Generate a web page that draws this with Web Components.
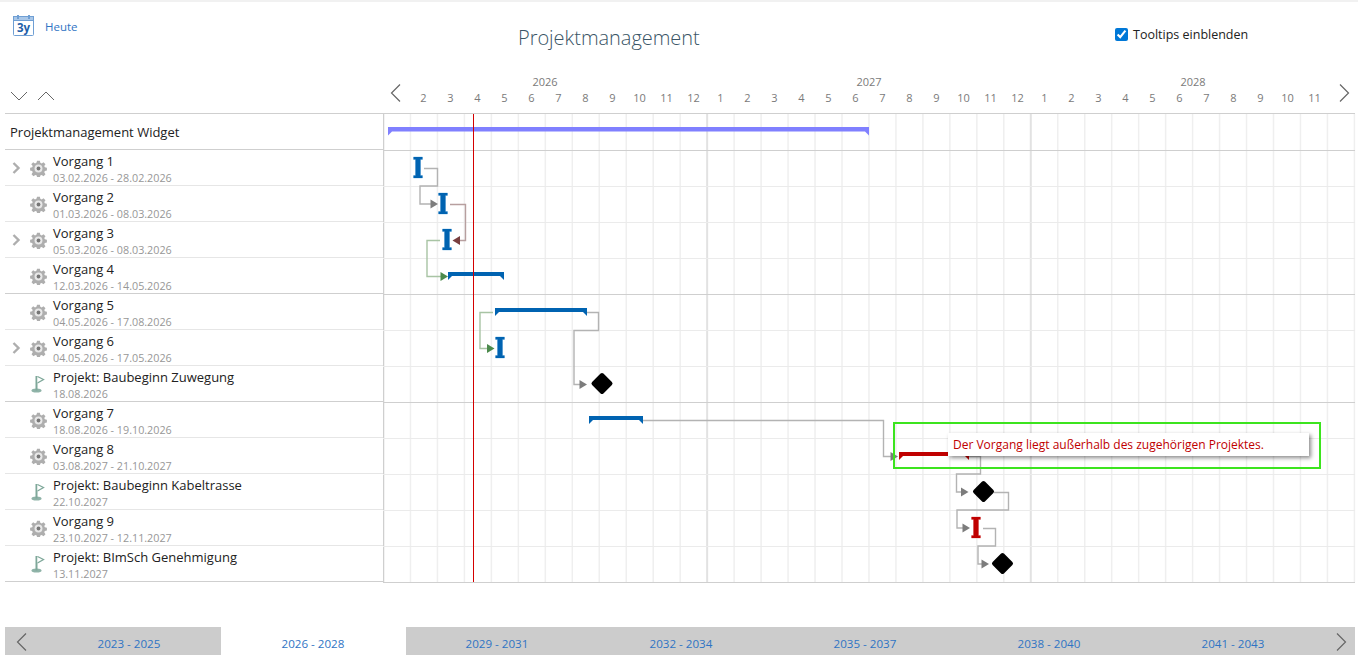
<!DOCTYPE html>
<html lang="de">
<head>
<meta charset="utf-8">
<title>Projektmanagement</title>
<style>
	html, body { margin: 0; height: 100%; overflow: hidden; background: #fff; }
	body { font-family: "Open Sans", "Liberation Sans", sans-serif; }
</style>
</head>
<body>
<gantt-app></gantt-app>

<script>
const FONT = '"Open Sans", "Liberation Sans", sans-serif';

const ICONS = {
	down: '<svg width="18" height="10" viewBox="0 0 18 10"><path d="M1 1l8 8 8-8" fill="none" stroke="#666" stroke-width="1"/></svg>',
	up: '<svg width="18" height="10" viewBox="0 0 18 10"><path d="M1 9l8-8 8 8" fill="none" stroke="#666" stroke-width="1"/></svg>',
	prev: '<svg width="11" height="18" viewBox="0 0 11 18"><path d="M10 .5L1.5 9l8.500 8.500" fill="none" stroke="#666" stroke-width="1.200"/></svg>',
	next: '<svg width="11" height="18" viewBox="0 0 11 18"><path d="M1 .5L9.500 9 1 17.500" fill="none" stroke="#666" stroke-width="1.200"/></svg>',
	expand: '<svg width="9" height="12" viewBox="0 0 9 12"><path d="M1.500 1L6.500 6l-5 5" fill="none" stroke="#aeaeae" stroke-width="2.400"/></svg>',
	gear: '<svg width="17" height="17" viewBox="0 0 18 18"><path d="M7.500 .8h3l.4 2.200 1.500.6 1.900-1.300 2.100 2.100-1.300 1.900.6 1.500 2.200.4v3l-2.200.4-.6 1.500 1.300 1.900-2.100 2.100-1.900-1.300-1.500.6-.4 2.200h-3l-.4-2.200-1.500-.6-1.900 1.300-2.100-2.100 1.300-1.900-.6-1.500-2.200-.4v-3l2.200-.4.6-1.500L1.300 4.400l2.100-2.100 1.900 1.300 1.500-.6z" fill="#aeaeae"/><circle cx="9" cy="9" r="4.200" fill="#e8e8e8"/><circle cx="9" cy="9" r="2" fill="#777"/></svg>',
	flag: '<svg width="14" height="18" viewBox="0 0 14 18"><ellipse cx="5.500" cy="15.500" rx="5" ry="2" fill="#8fb3a8"/><rect x="4.500" y="1" width="2" height="14.500" fill="#7fa89a"/><path d="M6.500 1.500l6 3-6 3.500" fill="#fff" stroke="#7fa89a" stroke-width="1.300"/></svg>',
	calendar: '<svg width="22" height="21" viewBox="0 0 22 21"><rect x=".5" y="1.500" width="20" height="19" rx="1" fill="#fff" stroke="#6f9fd4"/><rect x=".5" y="1.500" width="20" height="4" fill="#a9c7e8" stroke="#6f9fd4"/><rect x="4" y="0" width="2" height="4" fill="#6f9fd4"/><rect x="15" y="0" width="2" height="4" fill="#6f9fd4"/><text x="10.500" y="16.500" text-anchor="middle" font-family="\'Open Sans\',sans-serif" font-size="11.500" font-weight="700" fill="#1f5fa8">3y</text></svg>'
};

class GanttToolbar extends HTMLElement {
	constructor() {
		super();
		this.attachShadow({ mode: 'open' });
	}
	connectedCallback() {
		this.shadowRoot.innerHTML = `
			<style>
				:host { display: grid; grid-template-columns: 505px 1fr 243px; height: 68px; border-top: 2px solid #f1f1f1; box-sizing: content-box; }
				.today { display: flex; align-items: flex-start; gap: 10px; padding: 13px 0 0 13px; color: #2f74c4; font-size: 11.500px; line-height: 24px; }
				h1 { margin: 0; padding-top: 21px; font-weight: 300; font-size: 20px; line-height: 30px; color: #3a5566; padding-left: 13px; letter-spacing: -.03px; }
				label { display: flex; align-items: center; gap: 5px; font-size: 12.500px; color: #222; height: 20px; margin-top: 22px; }
				input { margin: 0; width: 13px; height: 13px; accent-color: #0078d7; }
			</style>
			<div class="today">${ICONS.calendar}<span>Heute</span></div>
			<h1>Projektmanagement</h1>
			<label><input type="checkbox" checked>Tooltips einblenden</label>
		`;
	}
}
customElements.define('gantt-toolbar', GanttToolbar);

class GanttTimescale extends HTMLElement {
	constructor() {
		super();
		this.attachShadow({ mode: 'open' });
	}
	connectedCallback() {
		const years = [2026, 2027, 2028].map(y => `<span>${y}</span>`).join('');
		let months = '';
		for (let i = 0; i < 36; i++) months += `<span>${i % 12 + 1}</span>`;
		this.shadowRoot.innerHTML = `
			<style>
				:host { display: grid; grid-template-columns: 378px 972px 1fr; height: 43px; padding-left: 5px; position: relative; color: #7a7a7a; font-size: 11px; }
				.fold { display: flex; gap: 9px; padding: 21px 0 0 5px; }
				.scale { display: flex; flex-direction: column; }
				.years { display: grid; grid-template-columns: repeat(3, 324px); text-align: center; line-height: 16px; padding-top: 4px; }
				.months { display: grid; grid-template-columns: repeat(36, 27px); text-align: center; line-height: 16px; padding-top: 0; }
				.months span:first-child, .months span:last-child { visibility: hidden; }
				.arrow { position: absolute; top: 14px; }
				.prev { left: 390px; }
				.next { left: 1339px; }
			</style>
			<div class="fold">${ICONS.down}${ICONS.up}</div>
			<div class="scale">
				<div class="years">${years}</div>
				<div class="months">${months}</div>
			</div>
			<span class="arrow prev">${ICONS.prev}</span>
			<span class="arrow next">${ICONS.next}</span>
		`;
	}
}
customElements.define('gantt-timescale', GanttTimescale);

class GanttRow extends HTMLElement {
	constructor() {
		super();
		this.attachShadow({ mode: 'open' });
	}
	connectedCallback() {
		const kind = this.getAttribute('kind') || 'task';
		const expand = this.hasAttribute('expand') ? ICONS.expand : '';
		const strong = this.hasAttribute('strong');
		this.shadowRoot.innerHTML = `
			<style>
				:host { display: grid; grid-template-columns: 22px 22px 1fr; height: 35px; border-bottom: 1px solid ${strong ? '#cfcfcf' : '#e6e6e6'}; }
				.exp { display: flex; align-items: center; justify-content: center; }
				.ico { display: flex; align-items: center; justify-content: center; padding-top: 1px; }
				.txt { overflow: hidden; white-space: nowrap; padding: 2px 0 0 4px; }
				.name { font-size: 13px; line-height: 18px; color: #222; }
				.date { font-size: 10.750px; line-height: 15px; color: #979797; margin-top: 1px; }
			</style>
			<div class="exp">${expand}</div>
			<div class="ico">${kind === 'flag' ? ICONS.flag : ICONS.gear}</div>
			<div class="txt">
				<div class="name"><slot></slot></div>
				<div class="date">${this.getAttribute('date')}</div>
			</div>
		`;
	}
}
customElements.define('gantt-row', GanttRow);

class GanttList extends HTMLElement {
	constructor() {
		super();
		this.attachShadow({ mode: 'open' });
	}
	connectedCallback() {
		this.shadowRoot.innerHTML = `
			<style>
				:host { display: block; width: 378px; }
				.root { height: 35px; border-top: 1px solid #cfcfcf; border-bottom: 1px solid #cfcfcf; padding-left: 5px; font-size: 13px; line-height: 37px; color: #222; }
			</style>
			<div class="root">${this.getAttribute('root')}</div>
			<slot></slot>
		`;
	}
}
customElements.define('gantt-list', GanttList);

class GanttChart extends HTMLElement {
	constructor() {
		super();
		this.attachShadow({ mode: 'open' });
	}
	// i-beam marker for a short task
	beam(cx, top, color) {
		const d = `M${cx - 4.5} ${top}h9v2.500h-2v16h2v2.500h-9v-2.500h2v-16h-2z`;
		return `<path d="${d}" fill="${color}" stroke="${color === '#0063b1' ? '#bcdcf2' : '#f0c0c0'}" stroke-width="1" paint-order="stroke"/>`;
	}
	// flat bar with the two small tips hanging from its ends
	bar(x1, x2, top, color, h = 4) {
		return `<path d="M${x1} ${top}H${x2}V${top + h + 4}L${x2 - 4} ${top + h}H${x1 + 4}L${x1} ${top + h + 4}z" fill="${color}"/>`;
	}
	diamond(cx, cy) {
		return `<rect x="${cx - 8}" y="${cy - 8}" width="16" height="16" rx="2" transform="rotate(45 ${cx} ${cy})" fill="#000"/>`;
	}
	link(d, dir, x, y, line, head) {
		const tip = dir === 'r' ? `M${x} ${y}l-7.500-4.500v9z` : `M${x} ${y}l7.500-4.500v9z`;
		return `<path d="${d}" fill="none" stroke="${line}" stroke-width="1.400"/><path d="${tip}" fill="${head}"/>`;
	}
	connectedCallback() {
		let grid = '';
		for (let i = 0; i <= 36; i++) {
			const x = 383.5 + i * 26.97;
			const year = i % 12 === 0 && i > 0 && i < 36;
			grid += `<line x1="${x}" y1="114" x2="${x}" y2="582" stroke="${i === 0 ? '#cfcfcf' : year ? '#e2e2e2' : '#efefef'}" stroke-width="${year ? 2 : 1.500}"/>`;
		}
		[113, 150, 186, 222, 258, 294, 330, 366, 402, 438, 474, 510, 546, 582].forEach(y => {
			const strong = [113, 150, 294, 402, 582].includes(y);
			grid += `<line x1="383" y1="${y + .5}" x2="1355" y2="${y + .5}" stroke="${strong ? '#cfcfcf' : '#ebebeb'}"/>`;
		});

		const gray = '#b3b3b3', grayHead = '#7c7c7c';
		const marks = [
			this.bar(388, 869, 127, '#8080ff', 4.500),
			this.link('M424 168.500H437.500V186H420V204H432', 'r', 438, 204, gray, grayHead),
			this.link('M450 204.500H465.500V240.500H458', 'l', 452.500, 240.500, '#b79f9f', '#7a3f3f'),
			this.link('M440 240.500H427V276.500H442', 'r', 448, 276.500, '#a8c4a4', '#4c8a4c'),
			this.beam(418, 157, '#0063b1'),
			this.beam(443, 193, '#0063b1'),
			this.beam(447, 229, '#0063b1'),
			this.bar(448, 504, 272, '#0063b1'),
			this.bar(495, 587, 308, '#0063b1'),
			this.link('M493 312.500H480V348.500H489', 'r', 494.500, 348.500, '#a8c4a4', '#4c8a4c'),
			this.beam(500, 337, '#0063b1'),
			this.link('M587 312.500H598.500V330.500H574V384.500H581', 'r', 587, 384.500, gray, grayHead),
			this.diamond(602, 383.500),
			this.bar(589, 643, 416, '#0063b1'),
			this.link('M643 420.500H883.500V456.500H892', 'r', 898, 456.500, gray, grayHead),
			this.bar(899, 969, 452, '#c00000'),
			this.link('M969 456.500H980.500V474H956.500V492H963', 'r', 968.500, 492, gray, grayHead),
			this.diamond(983.500, 491.500),
			this.link('M994 492.500H1008.500V510H957V528H964', 'r', 970, 528, gray, grayHead),
			this.beam(976, 517, '#c00000'),
			this.link('M983 528.500H995.500V546H978V564H983', 'r', 989, 564, gray, grayHead),
			this.diamond(1002.500, 563.500)
		].join('');

		this.shadowRoot.innerHTML = `
			<style>
				:host { display: block; position: relative; width: 975px; height: 470px; }
				svg { display: block; }
				.today { position: absolute; left: 90px; top: 1px; width: 1px; height: 468px; background: #d40000; }
				.focus { position: absolute; left: 510px; top: 309px; width: 424px; height: 43px; border: 2px solid #3ce41e; }
				.tip { position: absolute; left: 565px; top: 320px; width: 361px; height: 23px; box-sizing: border-box; background: #fff; box-shadow: 2px 2px 4px rgba(0,0,0,.45); color: #c00000; font-size: 12px; line-height: 23px; padding-left: 5px; white-space: nowrap; }
			</style>
			<svg width="975" height="470" viewBox="383 113 975 470">${grid}${marks}</svg>
			<div class="today"></div>
			<div class="focus"></div>
			<div class="tip">Der Vorgang liegt außerhalb des zugehörigen Projektes.</div>
		`;
	}
}
customElements.define('gantt-chart', GanttChart);

class GanttPager extends HTMLElement {
	constructor() {
		super();
		this.attachShadow({ mode: 'open' });
	}
	connectedCallback() {
		const ranges = ['2023 - 2025', '2026 - 2028', '2029 - 2031', '2032 - 2034', '2035 - 2037', '2038 - 2040', '2041 - 2043'];
		const active = this.getAttribute('active');
		const tabs = ranges.map(r => `<span class="tab${r === active ? ' on' : ''}">${r}</span>`).join('');
		this.shadowRoot.innerHTML = `
			<style>
				:host { display: flex; height: 28px; margin: 0 3px 0 5px; background: #ccc; color: #2f74c4; font-size: 11.600px; }
				.arrow { flex: 1 0 32px; display: flex; align-items: center; justify-content: center; padding-top: 2px; }
				.tab { flex: 0 0 184px; text-align: center; line-height: 33px; }
				.on { background: #fff; box-shadow: 1px 0 0 #fff; }
			</style>
			<span class="arrow" style="flex: 0 0 32px">${ICONS.prev}</span>
			${tabs}
			<span class="arrow">${ICONS.next}</span>
		`;
	}
}
customElements.define('gantt-pager', GanttPager);

class GanttApp extends HTMLElement {
	constructor() {
		super();
		this.attachShadow({ mode: 'open' });
	}
	connectedCallback() {
		const rows = [
			['Vorgang 1', '03.02.2026 - 28.02.2026', 'task', true],
			['Vorgang 2', '01.03.2026 - 08.03.2026', 'task', false],
			['Vorgang 3', '05.03.2026 - 08.03.2026', 'task', true],
			['Vorgang 4', '12.03.2026 - 14.05.2026', 'task', false, true],
			['Vorgang 5', '04.05.2026 - 17.08.2026', 'task', false],
			['Vorgang 6', '04.05.2026 - 17.05.2026', 'task', true],
			['Projekt: Baubeginn Zuwegung', '18.08.2026', 'flag', false, true],
			['Vorgang 7', '18.08.2026 - 19.10.2026', 'task', false],
			['Vorgang 8', '03.08.2027 - 21.10.2027', 'task', false],
			['Projekt: Baubeginn Kabeltrasse', '22.10.2027', 'flag', false],
			['Vorgang 9', '23.10.2027 - 12.11.2027', 'task', false],
			['Projekt: BImSch Genehmigung', '13.11.2027', 'flag', false, true]
		].map(([name, date, kind, expand, strong]) =>
			`<gantt-row kind="${kind}" date="${date}"${expand ? ' expand' : ''}${strong ? ' strong' : ''}>${name}</gantt-row>`
		).join('');
		this.shadowRoot.innerHTML = `
			<style>
				:host { display: flex; flex-direction: column; height: 657px; font-family: ${FONT}; }
				.body { display: flex; padding-left: 5px; }
				gantt-pager { margin-top: 44px; }
			</style>
			<gantt-toolbar></gantt-toolbar>
			<gantt-timescale></gantt-timescale>
			<div class="body">
				<gantt-list root="Projektmanagement Widget">${rows}</gantt-list>
				<gantt-chart></gantt-chart>
			</div>
			<gantt-pager active="2026 - 2028"></gantt-pager>
		`;
	}
}
customElements.define('gantt-app', GanttApp);
</script>
</body>
</html>
